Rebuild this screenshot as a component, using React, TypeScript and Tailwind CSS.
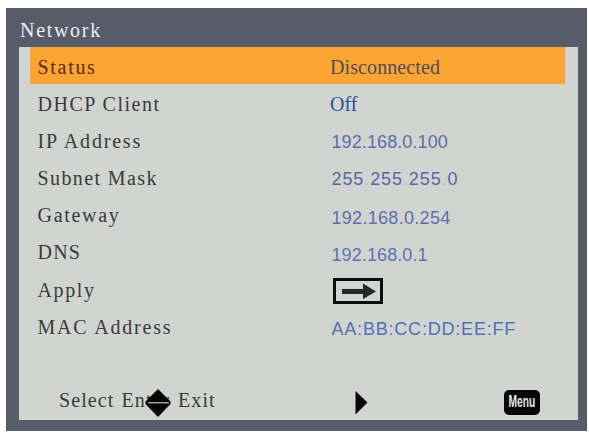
interface Row {
  label: string;
  labelClass: string;
  value?: string;
  valueClass?: string;
  active?: boolean;
}

const SERIF = 'font-["Liberation_Serif",serif] text-[20px] pt-[5px]';
const SANS = 'font-["Liberation_Sans",sans-serif] text-[18px] pl-[1.5px]';

const rows: Row[] = [
  { label: 'Status', labelClass: 'tracking-[1.7px] text-[#5c2c10]', value: 'Disconnected', valueClass: `${SERIF} text-[#544a5c] tracking-[0.1px]`, active: true },
  { label: 'DHCP Client', labelClass: 'tracking-[1.5px]', value: 'Off', valueClass: `${SERIF} text-[#2f4f9a]` },
  { label: 'IP Address', labelClass: 'tracking-[1.8px]', value: '192.168.0.100', valueClass: `${SANS} pt-[6px] tracking-[0.1px] text-[#5c6fa8]` },
  { label: 'Subnet Mask', labelClass: 'tracking-[1.4px]', value: '255.255.255.0', valueClass: `${SANS} pt-[6px] tracking-[0.9px] text-[#5c64a4]` },
  { label: 'Gateway', labelClass: 'tracking-[1.7px]', value: '192.168.0.254', valueClass: `${SANS} pt-[8px] tracking-[0.3px] text-[#5c6fa8]` },
  { label: 'DNS', labelClass: 'tracking-[1.2px]', value: '192.168.0.1', valueClass: `${SANS} pt-[8px] tracking-[0.1px] text-[#5c74b0]` },
  { label: 'Apply', labelClass: 'tracking-[1.6px]' },
  { label: 'MAC Address', labelClass: 'tracking-[1.8px]', value: 'AA:BB:CC:DD:EE:FF', valueClass: `${SANS} pt-[7px] tracking-[0.8px] text-[#4f72b4]` },
];

function ApplyIcon() {
  return (
    <svg className="ml-[3px] mt-[8px] h-[26px] w-[50px]" viewBox="0 0 50 26">
      <rect x="1.5" y="1.5" width="47" height="23" fill="none" stroke="#0b0c0c" strokeWidth="3" />
      <path d="M9 11H30V5.5L43 13.5L30 21V16H9Z" fill="#242727" />
    </svg>
  );
}

// The dots of a faded value are almost washed out on the panel
function Value({ text, faded }: { text: string; faded: boolean }) {
  if (!faded) return <>{text}</>;
  return (
    <>
      {text.split('').map((ch, i) => (
        <span key={i} className={ch === '.' ? 'opacity-20' : ''}>{ch}</span>
      ))}
    </>
  );
}

function MenuRow({ row }: { row: Row }) {
  return (
    <div className={`flex h-[37.1px] w-[535px] ${row.active ? 'bg-[#faa532]' : ''}`}>
      <div className={`w-[300px] whitespace-nowrap pl-[7.5px] pt-[5px] font-["Liberation_Serif",serif] text-[20px] leading-[30px] ${row.labelClass}`}>
        {row.label}
      </div>
      {row.value ? (
        <div className={`whitespace-nowrap leading-[30px] ${row.valueClass}`}>
          <Value text={row.value} faded={row.label === 'Subnet Mask'} />
        </div>
      ) : (
        <ApplyIcon />
      )}
    </div>
  );
}

export default function App() {
  return (
    <div className="h-[432px] w-[589px] overflow-hidden bg-white pl-[6px] pt-[8px]">
      <div className="flex h-[423px] w-[581px] flex-col bg-[#575c68] pl-[13px]">
        {/* Title bar */}
        <div className='h-[39px] pl-px pt-[7px] font-["Liberation_Serif",serif] text-[20px] leading-[30px] tracking-[1.7px] text-[#eceef4]'>
          Network
        </div>

        <div className="flex h-[373px] w-[559px] flex-col bg-[#d1d4d0] pl-[11px] text-[#383b39]">
          {rows.map((row) => (
            <MenuRow key={row.label} row={row} />
          ))}

          {/* Key hints */}
          <div className='relative mt-[36px] h-[36px] font-["Liberation_Serif",serif] text-[20px] leading-[30px]'>
            <div className="flex whitespace-nowrap pl-[29px] pt-[5px] tracking-[1.1px]">
              <span className="w-[62.5px]">Select</span>
              <span className="w-[56.5px]">Enter</span>
              <span>Exit</span>
            </div>
            <svg className="absolute left-[115px] top-[9px] h-[30px] w-[26px]" viewBox="0 0 26 30">
              <path d="M13 0L25.5 12.5V15L13 28L0.5 15V12.5Z" fill="#050505" />
              <path d="M3 13.7H24" stroke="#a9a4a8" strokeWidth="1.4" />
            </svg>
            <svg className="absolute left-[325px] top-[10px] h-[26px] w-[14px]" viewBox="0 0 14 26">
              <path d="M0.5 1L12.5 12.5L0.5 24.5Z" fill="#080808" />
            </svg>
            <div className='absolute left-[474px] top-[10px] flex h-[25px] w-[36px] items-center justify-center rounded-[5px] bg-[#070707] font-["Liberation_Sans",sans-serif] text-[16px] font-bold leading-none text-[#e8e8e8]'>
              <span className="scale-x-[0.64]">Menu</span>
            </div>
          </div>
        </div>
      </div>
    </div>
  );
}
